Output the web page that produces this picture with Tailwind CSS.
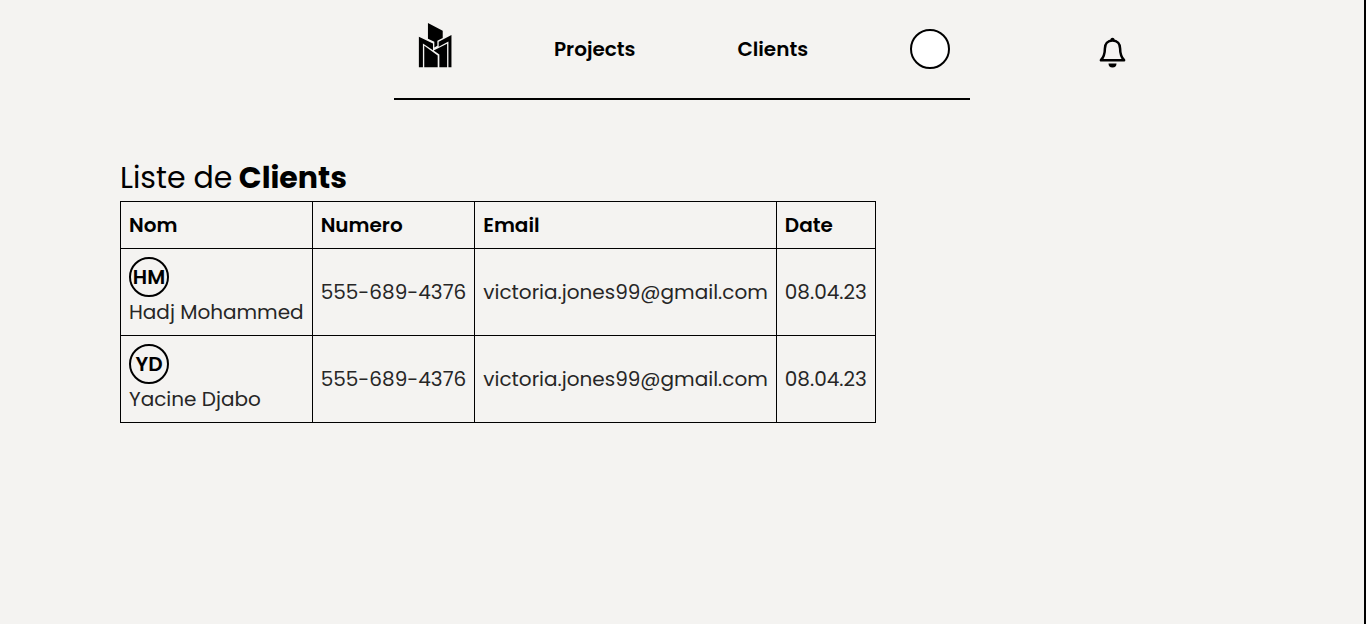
<!DOCTYPE html>
<html lang="fr">
<head>
<meta charset="utf-8">
<meta name="viewport" content="width=device-width, initial-scale=1">
<title>Liste de Clients</title>
<script src="https://cdn.jsdelivr.net/npm/@tailwindcss/browser@4"></script>
</head>
<body class="min-h-screen border-r-2 border-black bg-[#f4f3f1] font-['Poppins','Inter',sans-serif] text-xl leading-[30px] text-black">
<header class="grid grid-cols-[1fr_576px_1fr] px-[120px]">
  <nav class="col-start-2 flex h-[100px] items-center justify-between border-b-2 border-black pr-5 pl-6 font-semibold">
    <a href="#" aria-label="Accueil" class="-mt-2">
      <svg class="h-[45px] w-[34px]" viewBox="24 24 100 134" fill="currentColor" aria-hidden="true">
        <path d="M53 24 L97 47 V69 L81 77 V92 L72 97 V80 L53 71 Z"/>
        <path d="M26 65 L68 85 V105 L38 85 V156 H26 Z"/>
        <path d="M123 60 V156 H114 V79 L85 95 V80 Z"/>
        <path d="M42 92 L82 121 V156 H42 Z"/>
        <path d="M110 86 V156 H87 V118 L70 106 Z"/>
      </svg>
    </a>
    <a href="#">Projects</a>
    <a href="#">Clients</a>
    <a href="#" aria-label="Profil" class="size-10 rounded-full border-2 border-black bg-white"></a>
  </nav>
  <button type="button" aria-label="Notifications" class="mt-9 ml-3 h-8 w-8 justify-self-center">
    <svg class="size-8" viewBox="0 0 32 32" fill="none" aria-hidden="true">
      <path d="M15.500 4.500c-5 0-7.600 3.500-7.600 7.900 0 6.100-1.400 8.900-4 11.800h23.200c-2.600-2.900-4-5.700-4-11.800 0-4.400-2.600-7.900-7.600-7.900Z" stroke="currentColor" stroke-width="2.500" stroke-linejoin="round"/>
      <path d="M13.300 4.500a2.200 2.700 0 0 1 4.400 0ZM11.500 27.500h8a4 4 0 0 1-8 0Z" fill="currentColor"/>
    </svg>
  </button>
</header>
<main class="px-[120px] pt-[55px]">
  <h1 class="text-3xl leading-[46px] font-normal">Liste de<strong class="font-bold"> Clients</strong></h1>
  <table class="border-collapse text-left font-normal [&_td]:border [&_td]:border-black [&_td]:p-2 [&_td]:text-neutral-800 [&_th]:border [&_th]:border-black [&_th]:p-2 [&_th]:font-semibold">
    <thead>
      <tr><th scope="col">Nom</th><th scope="col">Numero</th><th scope="col">Email</th><th scope="col">Date</th></tr>
    </thead>
    <tbody>
      <tr>
        <td><div class="flex size-10 items-center justify-center rounded-full border-2 border-black font-semibold text-black">HM</div>Hadj Mohammed</td>
        <td>555-689-4376</td><td>victoria.jones99@gmail.com</td><td>08.04.23</td>
      </tr>
      <tr>
        <td><div class="flex size-10 items-center justify-center rounded-full border-2 border-black font-semibold text-black">YD</div>Yacine Djabo</td>
        <td>555-689-4376</td><td>victoria.jones99@gmail.com</td><td>08.04.23</td>
      </tr>
    </tbody>
  </table>
</main>
</body>
</html>
